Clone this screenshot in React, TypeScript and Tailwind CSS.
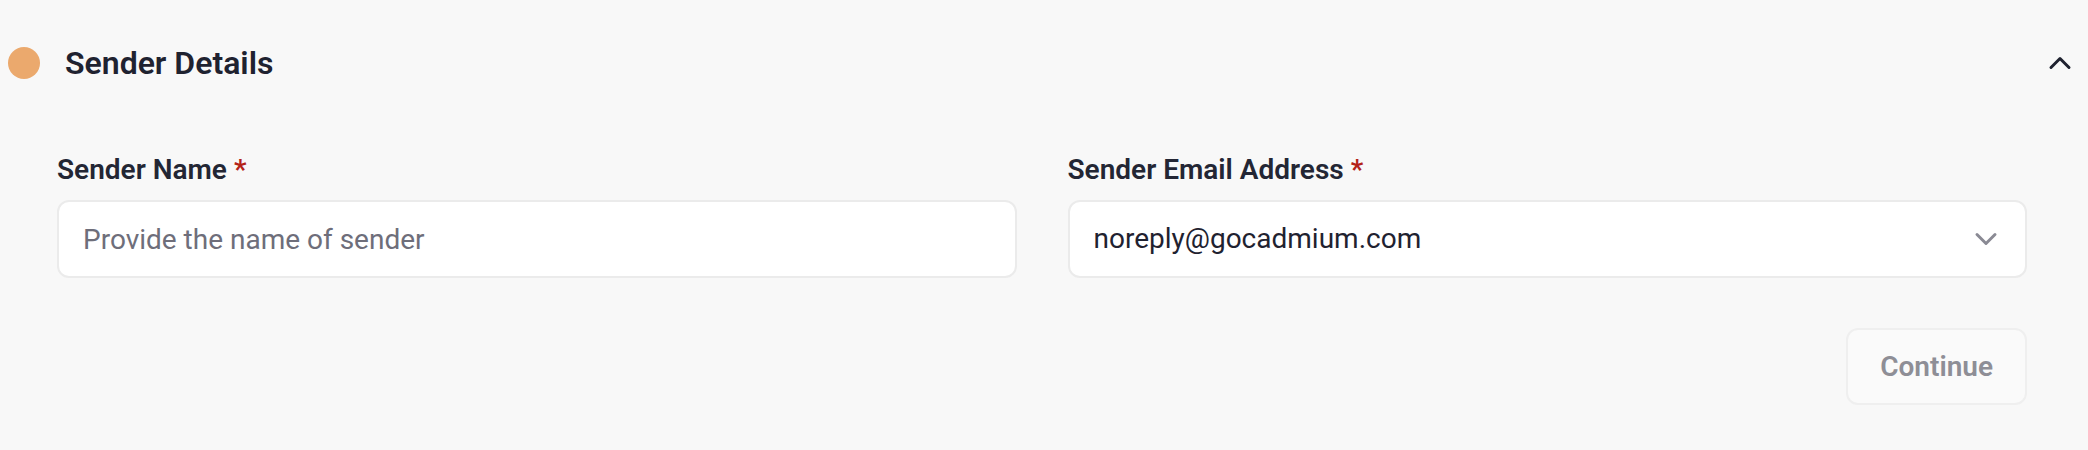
import { ChevronDown, ChevronUp } from "lucide-react";

const font = { fontFamily: "Roboto, 'Noto Sans', sans-serif" };

function Label({ text }: { text: string }) {
  return (
    <label className="block text-[28px] leading-[40px] font-semibold text-[#232634]">
      {text} <span className="text-[#b42318]">*</span>
    </label>
  );
}

export default function App() {
  return (
    <div style={font} className="h-[450px] w-full bg-[#f8f8f8]">
      <div className="flex items-center justify-between pl-[8px] pr-[10px] pt-[45px]">
        <div className="flex items-center gap-[25px]">
          <span className="h-[32px] w-[32px] rounded-full bg-[#eba96d]" />
          <h2 className="text-[32px] leading-[36px] font-semibold text-[#1f2230]">Sender Details</h2>
        </div>
        <ChevronUp size={36} strokeWidth={2} className="text-[#1f2230]" />
      </div>

      <div className="pl-[57px] pr-[61px] pt-[69px]">
        <div className="grid grid-cols-2 gap-[51px]">
          <div className="flex flex-col gap-[10px]">
            <Label text="Sender Name" />
            <input
              placeholder="Provide the name of sender"
              className="h-[78px] w-full rounded-[12px] border-2 border-[#ebebeb] bg-white px-[24px] text-[28px] text-[#1f2230] placeholder:text-[#6e6e7a] focus:outline-none"
            />
          </div>
          <div className="flex flex-col gap-[10px]">
            <Label text="Sender Email Address" />
            <button
              type="button"
              className="flex h-[78px] w-full items-center justify-between rounded-[12px] border-2 border-[#ebebeb] bg-white pl-[24px] pr-[21px] text-left text-[28px] text-[#1f2230]"
            >
              <span>noreply@gocadmium.com</span>
              <ChevronDown size={36} strokeWidth={2} className="text-[#8a8a94]" />
            </button>
          </div>
        </div>

        <div className="flex justify-end pt-[50px]">
          <button
            type="button"
            disabled
            className="h-[77px] rounded-[12px] border-2 border-[#efefef] bg-[#fafafa] px-[32px] text-[28px] font-semibold text-[#8e8e96]"
          >
            Continue
          </button>
        </div>
      </div>
    </div>
  );
}
